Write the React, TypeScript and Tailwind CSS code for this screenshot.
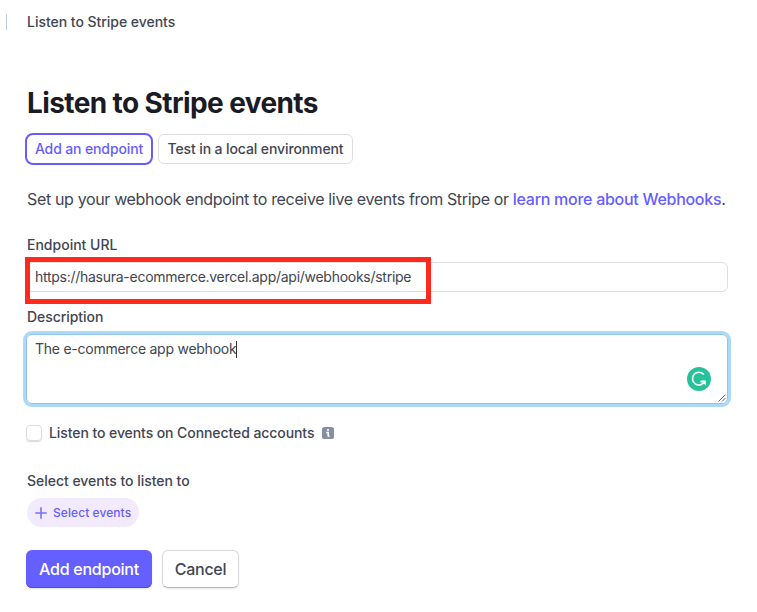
import React from "react";

function PlusIcon() {
  return (
    <svg width="12" height="12" viewBox="0 0 12 12" fill="none" stroke="#7a70f8" strokeWidth="1.6" strokeLinecap="round">
      <path d="M6 0.8V11.2M0.8 6H11.2" />
    </svg>
  );
}

function InfoIcon() {
  return (
    <svg width="12" height="12" viewBox="0 0 12 12">
      <rect width="12" height="12" rx="2.6" fill="#87909f" />
      <circle cx="6" cy="3" r="1.05" fill="#fff" />
      <path d="M4.2 5.5H6.2V9.6" fill="none" stroke="#fff" strokeWidth="1.6" />
      <path d="M6 9.1H7.8" fill="none" stroke="#fff" strokeWidth="1" />
    </svg>
  );
}

function GrammarlyBadge() {
  return (
    <svg className="absolute right-4 top-8" width="24" height="24" viewBox="0 0 24 24">
      <circle cx="12" cy="12" r="12" fill="#27c29b" />
      <path d="M16.8 7.5A6.4 6.4 0 1 0 17.6 14.6H13.4" fill="none" stroke="#fff" strokeWidth="1.6" />
      <path d="M14.2 13.6H18.7V18.6L17 16.8Z" fill="#fff" />
    </svg>
  );
}

function ResizeGrip() {
  return (
    <svg className="absolute right-px bottom-px" width="8" height="8" viewBox="0 0 8 8" stroke="#5f5f5f" strokeWidth="1">
      <path d="M0.5 7.5L7.5 0.5M4 7.5L7.5 4" />
    </svg>
  );
}

export default function App() {
  return (
    <div className="h-[612px] w-[757px] overflow-hidden bg-white font-['Inter',sans-serif] text-sm leading-5 text-[#414552] whitespace-nowrap">
      <header className="flex h-11 items-center gap-5 pl-1.5 font-medium">
        <div className="h-4 w-px bg-[#c0c8d2]" />
        <span className="tracking-[-0.03px]">Listen to Stripe events</span>
      </header>

      <main className="w-[728px] pl-[26px]">
        <h1 className="mt-[43px] ml-px h-8 text-[28px] leading-8 font-bold tracking-[-0.6px] text-[#1a1b25]">
          <span>Listen to Stripe events</span>
        </h1>

        <div className="mt-3.5 -ml-px flex items-center gap-[5px] font-medium">
          <button className="h-8 w-32 rounded-lg border-2 border-[#675dff] tracking-[-0.13px] text-[#675dff]"><span>Add an endpoint</span></button>
          <button className="h-[30px] w-[195px] rounded-md border border-[#dddee1] tracking-[-0.11px]"><span>Test in a local environment</span></button>
        </div>

        <p className="mt-[22px] ml-px h-6 text-base leading-6">
          <span className="tracking-[-0.35px]">Set up your webhook endpoint to receive live events from Stripe or </span>
          <a className="font-medium tracking-[-0.28px] text-[#675dff]">learn more about Webhooks</a>.
        </p>

        <label className="mt-6 ml-px block h-5 font-medium"><span>Endpoint URL</span></label>
        <div className="relative mt-[7px] flex h-[30px] items-center rounded-md border border-[#dddee1] pl-2">
          <span className="tracking-[-0.27px]">https://hasura-ecommerce.vercel.app/api/webhooks/stripe</span>
          <div className="absolute -top-1.5 -left-0.5 h-[47px] w-[406px] border-5 border-[#ff2a1c]" />
        </div>

        <label className="mt-[15px] ml-px block h-5 font-medium tracking-[-0.05px]"><span>Description</span></label>
        <div className="relative mt-[7px] flex h-[70px] items-start rounded-md border border-[#8fc3ea] pt-1 pl-2 shadow-[0_0_0_3px_#abdaf7]">
          <span className="tracking-[-0.25px]">The e-commerce app webhook</span>
          <div className="mt-0.5 h-[17px] w-px bg-[#30313d]" />
          <GrammarlyBadge />
          <ResizeGrip />
        </div>

        <div className="mt-[19px] flex h-5 items-center font-medium">
          <div className="size-4 rounded border border-[#dcdde1] shadow-[0_1px_1px_rgba(0,0,0,0.14)]" />
          <span className="mr-2 ml-[7px] tracking-[-0.08px]">Listen to events on Connected accounts</span>
          <InfoIcon />
        </div>

        <div className="mt-7 ml-px h-5 font-medium tracking-[-0.03px]"><span>Select events to listen to</span></div>
        <button className="mt-[7px] ml-px flex h-[29px] w-28 items-center gap-1.5 rounded-full bg-[#f2ebff] pl-2 text-xs font-medium tracking-[0.07px] text-[#675dff]">
          <PlusIcon />
          <span>Select events</span>
        </button>

        <div className="mt-[23px] flex gap-2.5 text-base font-medium">
          <button className="h-[38px] w-[126px] rounded-md bg-[#655fff] tracking-[-0.25px] text-white shadow-[inset_0_-1px_0_#5149d8,0_1px_2px_rgba(0,0,0,0.12)]"><span>Add endpoint</span></button>
          <button className="h-[38px] w-[77px] rounded-md border border-[#d8dade] border-b-[#b8bac0] tracking-[-0.3px] shadow-[0_1px_2px_rgba(0,0,0,0.10)]"><span>Cancel</span></button>
        </div>
      </main>
    </div>
  );
}
